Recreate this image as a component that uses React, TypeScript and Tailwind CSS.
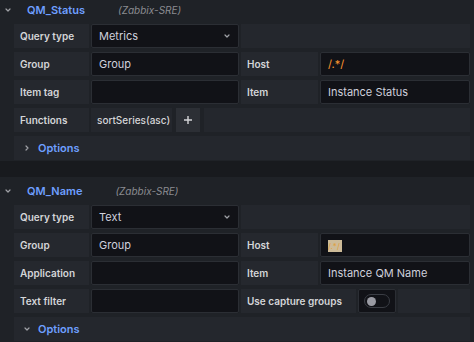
import { ReactNode } from "react";

const font = { fontFamily: "Inter, 'Noto Sans', sans-serif" };

function Chevron({ dir }: { dir: "down" | "right" }) {
  return (
    <svg width="8" height="8" viewBox="0 0 8 8" className="text-[#9fa1a6]">
      {dir === "down" ? (
        <path d="M2 3l2 2 2-2" stroke="currentColor" strokeWidth="1.2" fill="none" strokeLinecap="round" strokeLinejoin="round" />
      ) : (
        <path d="M3 2l2 2-2 2" stroke="currentColor" strokeWidth="1.2" fill="none" strokeLinecap="round" strokeLinejoin="round" />
      )}
    </svg>
  );
}

function Label({ children, w = "w-[75px]" }: { children: ReactNode; w?: string }) {
  return (
    <div className={`${w} shrink-0 h-full flex items-center px-[6px] bg-[#25282e] text-[10px] font-semibold whitespace-nowrap text-[#d4d5d8]`}>
      {children}
    </div>
  );
}

function Input({ children, grow = false, select = false }: { children?: ReactNode; grow?: boolean; select?: boolean }) {
  return (
    <div
      className={`${grow ? "flex-1" : "w-[148px] shrink-0"} h-full flex items-center px-[7px] bg-[#111217] border border-[#2b2e34] rounded-[2px] text-[11px] text-[#cfd0dc]`}
    >
      <span className="flex-1 truncate">{children}</span>
      {select && <Chevron dir="down" />}
    </div>
  );
}

function Filler() {
  return <div className="flex-1 h-full bg-[#24272d]" />;
}

function Row({ children }: { children: ReactNode }) {
  return <div className="h-[24px] flex items-stretch gap-[2px]">{children}</div>;
}

function Options({ open }: { open: boolean }) {
  return (
    <div className="h-[24px] flex items-center bg-[#24272d] pl-[9px] gap-[7px]">
      <Chevron dir={open ? "down" : "right"} />
      <span className="text-[11px] font-semibold text-[#6e9fff]">Options</span>
    </div>
  );
}

function Section({ name, source, children, first = false }: { name: string; source: string; children: ReactNode; first?: boolean }) {
  return (
    <div className={`${first ? "-mt-[4px]" : ""} mb-[16px] bg-[#1f2227]`}>
      <div className="h-[28px] flex items-center pl-[4px]">
        <Chevron dir="down" />
        <span className="ml-[15px] mr-[33px] text-[11px] font-semibold text-[#6e9fff]">{name}</span>
        <span className="text-[10px] italic text-[#8b8c91]">{source}</span>
      </div>
      <div className="flex flex-col gap-[4px] pl-[14px] pr-[4px] pb-[1px]">{children}</div>
    </div>
  );
}

export default function App() {
  return (
    <div className="w-[474px] h-[342px] overflow-hidden bg-[#181a1e]" style={font}>
      <Section name="QM_Status" source="(Zabbix-SRE)" first>
        <Row>
          <Label>Query type</Label>
          <Input select>Metrics</Input>
          <Filler />
        </Row>
        <Row>
          <Label>Group</Label>
          <Input>Group</Input>
          <Label w="w-[77px]">Host</Label>
          <Input grow>
            <span className="text-[#ff9830]">/.*/</span>
          </Input>
        </Row>
        <Row>
          <Label>Item tag</Label>
          <Input />
          <Label w="w-[77px]">Item</Label>
          <Input grow>Instance Status</Input>
        </Row>
        <Row>
          <Label>Functions</Label>
          <div className="w-[81px] h-full flex items-center px-[6px] bg-[#24272d] text-[10px] font-medium whitespace-nowrap text-[#d4d5d8]">
            sortSeries(asc)
          </div>
          <div className="ml-[2px] w-[24px] h-full flex items-center justify-center bg-[#2c2f35] text-[#d4d5d8]">
            <svg width="10" height="10" viewBox="0 0 10 10">
              <path d="M5 1v8M1 5h8" stroke="currentColor" strokeWidth="1.4" />
            </svg>
          </div>
          <div className="ml-[2px] flex-1 h-full bg-[#24272d]" />
        </Row>
        <Options open={false} />
      </Section>

      <Section name="QM_Name" source="(Zabbix-SRE)">
        <Row>
          <Label>Query type</Label>
          <Input select>Text</Input>
          <Filler />
        </Row>
        <Row>
          <Label>Group</Label>
          <Input>Group</Input>
          <Label w="w-[77px]">Host</Label>
          <Input grow>
            <span className="inline-block h-[12px] w-[14px] bg-[#cdbb98] align-middle text-[8px] leading-[12px] text-[#e0a040]">/.*/</span>
          </Input>
        </Row>
        <Row>
          <Label>Application</Label>
          <Input />
          <Label w="w-[77px]">Item</Label>
          <Input grow>Instance QM Name</Input>
        </Row>
        <Row>
          <Label>Text filter</Label>
          <Input />
          <Label w="w-[115px]">Use capture groups</Label>
          <div className="w-[38px] h-full flex items-center justify-center bg-[#111217] border border-[#2b2e34] rounded-[2px]">
            <div className="w-[26px] h-[14px] rounded-full border border-[#3a3d44] bg-[#111217] flex items-center px-[2px]">
              <div className="w-[9px] h-[9px] rounded-full bg-[#9a9ba3]" />
            </div>
          </div>
          <Filler />
        </Row>
        <Options open />
      </Section>
    </div>
  );
}
